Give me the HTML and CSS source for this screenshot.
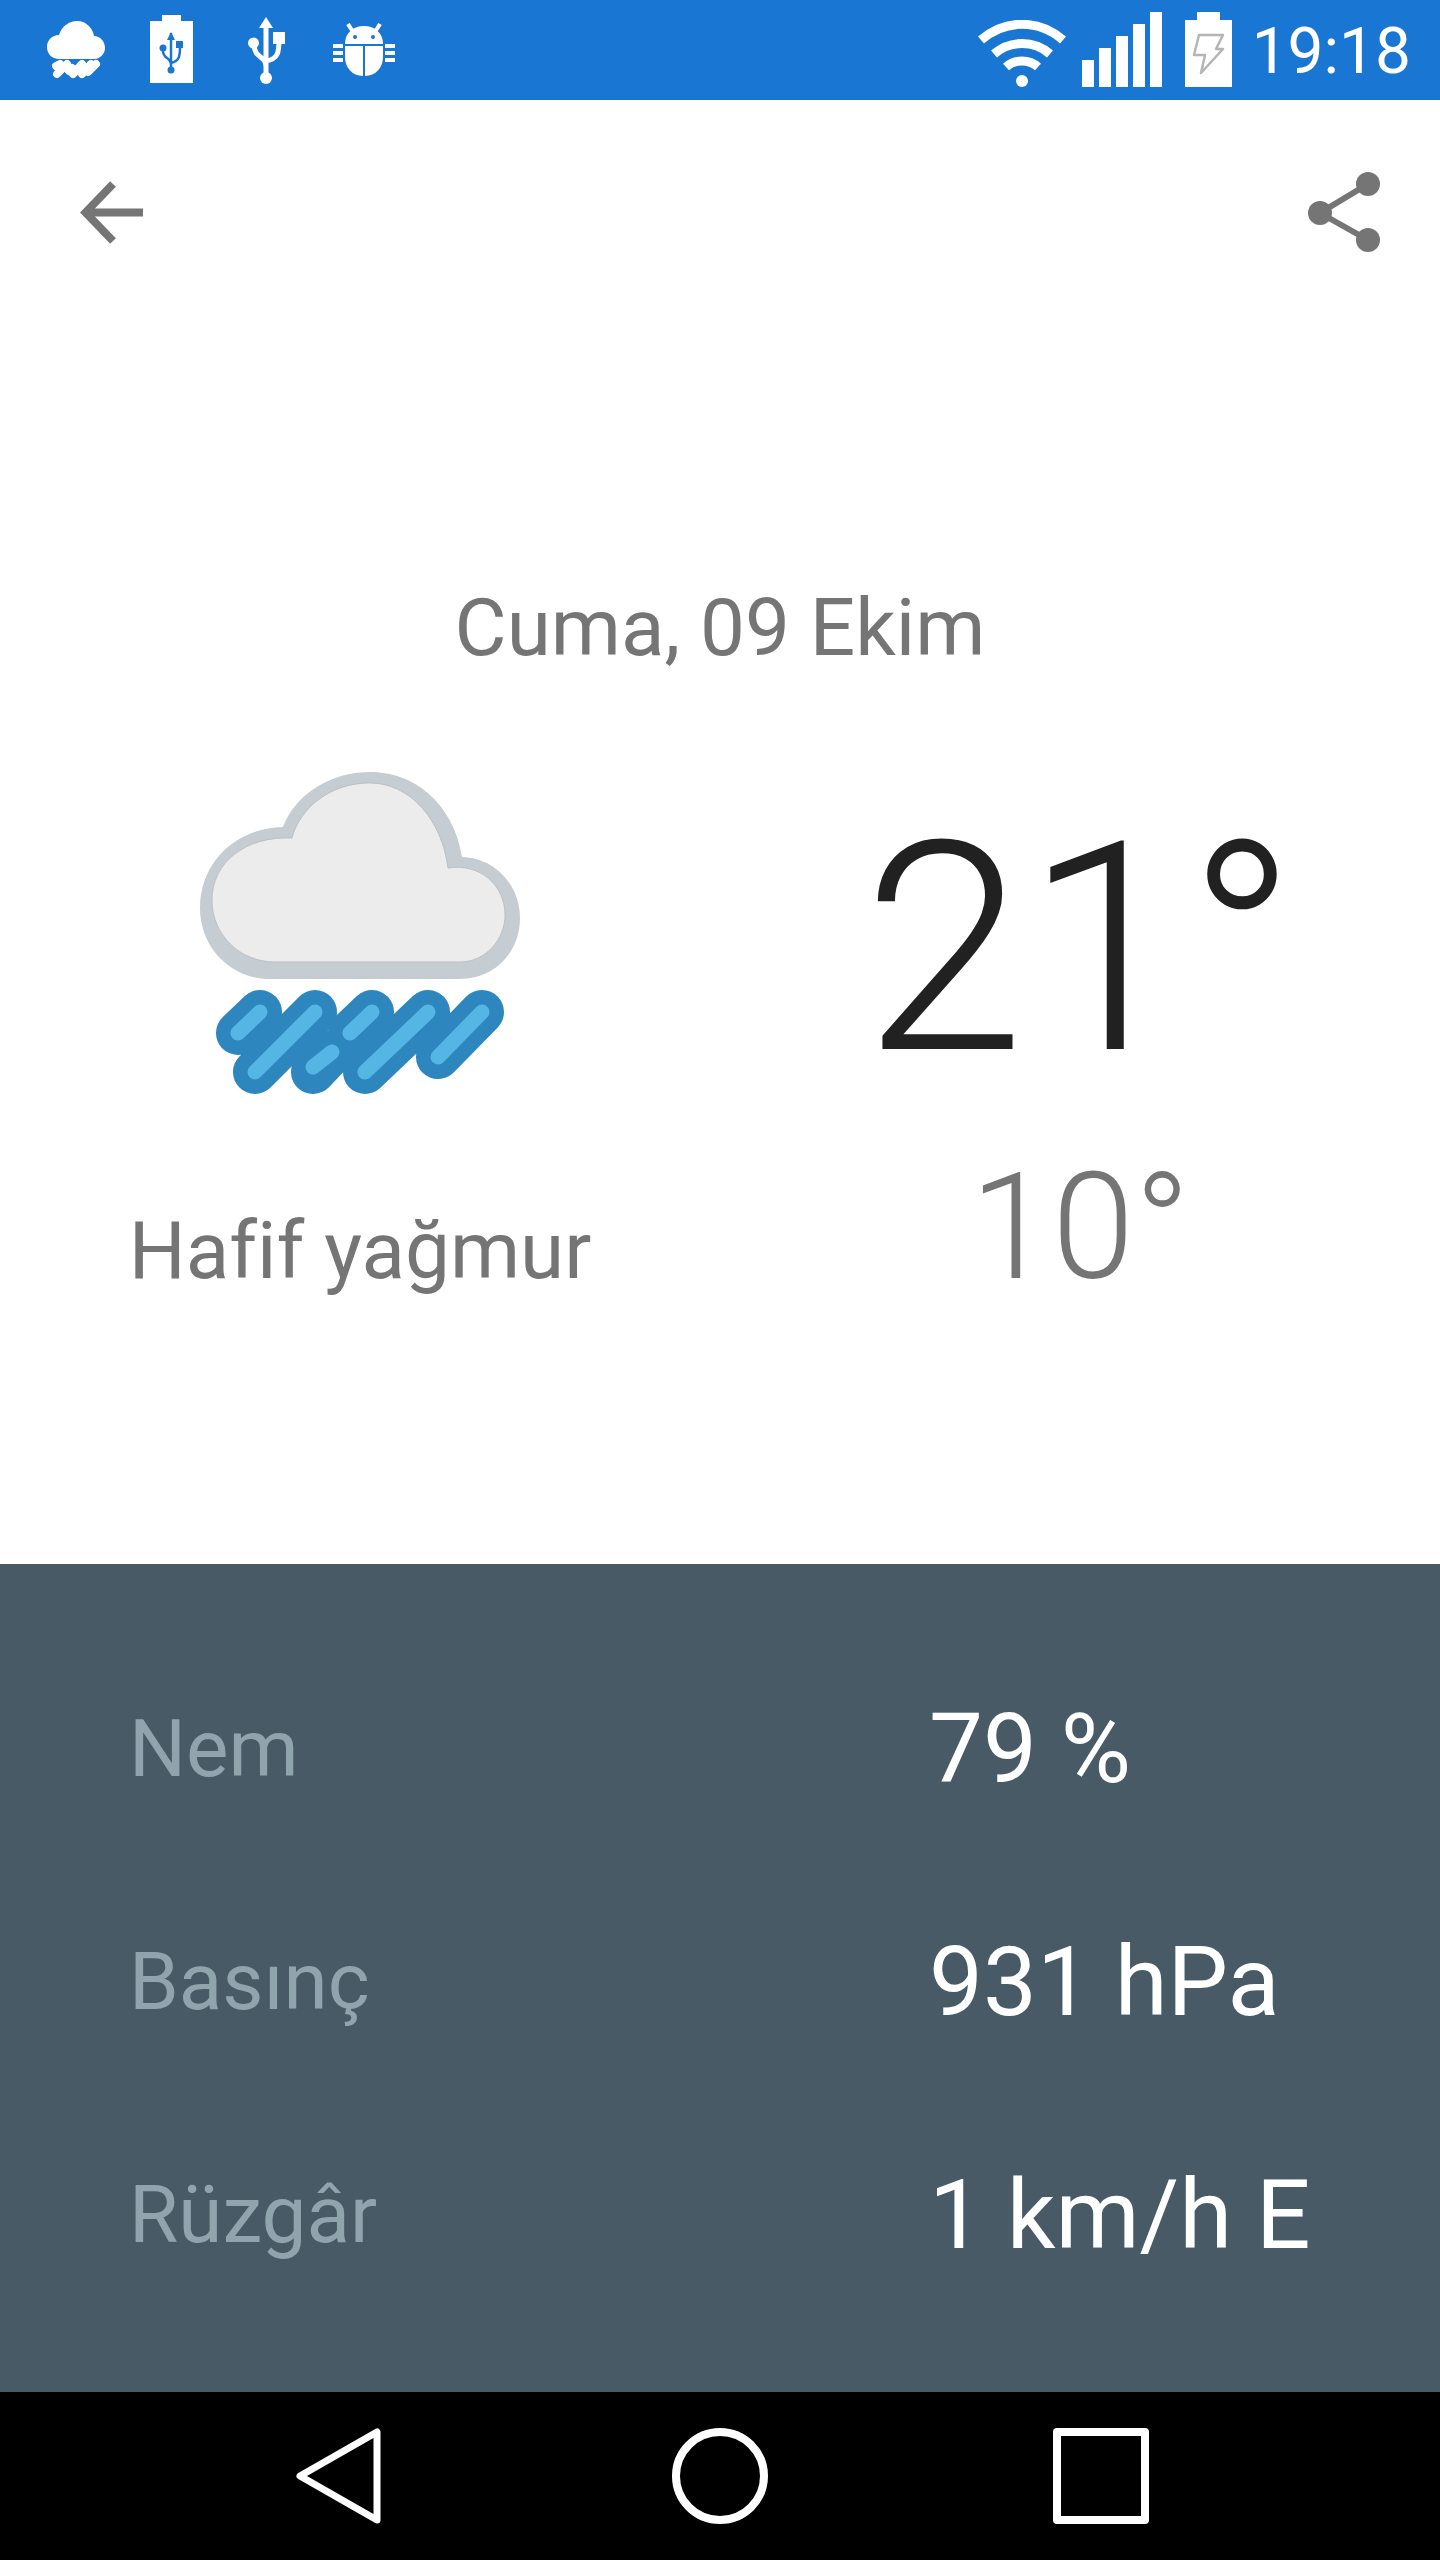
FILE: index.html
```html
<!DOCTYPE html>
<html lang="tr">
<head>
  <meta charset="UTF-8" />
  <title>Hava Durumu</title>
  <link rel="stylesheet" href="styles.css">
</head>
<body>
  <div class="phone">
    <!-- Status bar -->
    <div class="status-bar">
      <div class="status-left">
        <svg class="s-cloud" viewBox="0 0 58 58" width="58" height="58">
          <path fill="#fff" d="M12 38C5 38 0 33 0 26C0 19 5 14 12 14C15 5 22 0 30 0C40 0 46 8 47 15C53 15 58 20 58 27C58 33 53 38 47 38Z"/>
          <g stroke="#fff" stroke-width="8" stroke-linecap="round" fill="none">
            <path d="M9 45L13 43M10 53L20 43M22 50L25 47M26 53L35 43M35 53L44 43M41 51L49 43"/>
          </g>
        </svg>
        <svg class="s-batt" viewBox="0 0 43 68" width="43" height="68">
          <path fill="#fff" d="M12 0H31V6H43V68H0V6H12Z"/>
          <g fill="none" stroke="#1976d2" stroke-width="2.5">
            <path d="M21 18V56M13 36C13 44 21 42 21 50M21 48C29 46 30 42 30 32"/>
          </g>
          <path fill="#1976d2" d="M21 17L25 25H17Z"/>
          <circle fill="#1976d2" cx="13" cy="33" r="3.500"/>
          <rect fill="#1976d2" x="26" y="26" width="7" height="7"/>
          <circle fill="#1976d2" cx="21" cy="55" r="3.500"/>
        </svg>
        <svg class="s-usb" viewBox="0 0 37 67" width="37" height="67">
          <path fill="#fff" d="M18 0L25 11H11Z"/>
          <g fill="none" stroke="#fff" stroke-width="5">
            <path d="M18 8V60M6 27C6 42 18 38 18 50M18 44C30 42 31 36 31 22"/>
          </g>
          <circle fill="#fff" cx="5.500" cy="26" r="5.500"/>
          <rect fill="#fff" x="25" y="15" width="12" height="12"/>
          <circle fill="#fff" cx="18" cy="61" r="6"/>
        </svg>
        <svg class="s-bug" viewBox="0 0 62 54" width="62" height="54">
          <path fill="none" stroke="#fff" stroke-width="4" d="M15 1L20 9M47 1L42 9"/>
          <path fill="#fff" d="M12 21C12 10 20 3 31 3C42 3 50 10 50 21Z"/>
          <path fill="#fff" d="M12 23H30V53C19 53 12 44 12 34ZM32 23H50V34C50 44 43 53 32 53Z"/>
          <path fill="#fff" d="M0 21H10V25H0ZM0 28H10V32H0ZM0 35H10V39H0ZM52 21H62V25H52ZM52 28H62V32H52ZM52 35H62V39H52Z"/>
          <circle fill="#1976d2" cx="22" cy="14" r="2"/>
          <circle fill="#1976d2" cx="40" cy="14" r="2"/>
        </svg>
      </div>
      <div class="status-right">
        <svg class="s-wifi" viewBox="0 0 88 67" width="88" height="67">
          <g fill="none" stroke="#fff" stroke-width="9">
            <path d="M3 20C27 -1 61 -1 85 20"/>
            <path d="M16 34C32 20 56 20 72 34"/>
            <path d="M28 47C37 39 51 39 60 47"/>
          </g>
          <circle fill="#fff" cx="44" cy="61" r="6"/>
        </svg>
        <div class="signal">
          <span class="bar bar-1"></span>
          <span class="bar bar-2"></span>
          <span class="bar bar-3"></span>
          <span class="bar bar-4"></span>
          <span class="bar bar-5"></span>
        </div>
        <svg class="s-charge" viewBox="0 0 47 75" width="47" height="75">
          <path fill="#fff" d="M12 0H35V8H47V75H0V8H12Z"/>
          <path fill="none" stroke="#b5b5b5" stroke-width="2.500" stroke-linejoin="round" d="M14 23H38L31 37H38L16 61L20 43H9Z"/>
        </svg>
        <span class="clock">19:18</span>
      </div>
    </div>

    <!-- Toolbar -->
    <div class="toolbar">
      <svg viewBox="0 0 63 63" width="63" height="63">
        <path fill="none" stroke="#757575" stroke-width="8" d="M33 3L5.500 31.500L33 60M5.500 31.500H63"/>
      </svg>
      <svg viewBox="0 0 72 80" width="72" height="80">
        <path fill="none" stroke="#757575" stroke-width="6" d="M60 12L12 41L60 68"/>
        <circle fill="#757575" cx="60" cy="12" r="12"/>
        <circle fill="#757575" cx="12" cy="41" r="12"/>
        <circle fill="#757575" cx="60" cy="68" r="12"/>
      </svg>
    </div>

    <!-- Forecast -->
    <div class="forecast">
      <div class="date">Cuma, 09 Ekim</div>
      <div class="forecast-grid">
        <div class="condition">
          <svg class="weather-icon" viewBox="0 0 360 360" width="360" height="360">
            <path fill="#c5ccd2" d="M90 229C50 229 20 197 20 158C20 113 55 78 103 77C115 45 150 22 190 22C240 22 275 60 282 107C315 108 340 135 340 168C340 202 315 229 280 229Z"/>
            <path fill="#ececec" stroke="#b4babf" stroke-width="0.800" d="M95 212C60 212 32 185 32 150C32 113 65 86 112 88C120 58 150 33 190 33C230 33 262 70 268 118C300 113 325 135 325 165C325 190 305 212 280 212Z"/>
            <g fill="none" stroke="#2e86bf" stroke-width="44" stroke-linecap="round">
              <path d="M58 283L80 262M75 322L135 262M133 322L152 302M170 283L192 262M185 322L248 262M258 307L302 262"/>
            </g>
            <g fill="none" stroke="#55b6e6" stroke-width="15" stroke-linecap="round">
              <path d="M58 283L80 262M75 322L135 262M133 317L152 302M170 283L192 262M185 322L248 262M258 307L302 262"/>
            </g>
          </svg>
          <div class="condition-text">Hafif yağmur</div>
        </div>
        <div class="temps">
          <div class="temp-high">21°</div>
          <div class="temp-low">10°</div>
        </div>
      </div>
    </div>

    <!-- Details -->
    <div class="details">
      <div class="detail-row">
        <div class="detail-label">Nem</div>
        <div class="detail-value">79 %</div>
      </div>
      <div class="detail-row">
        <div class="detail-label">Basınç</div>
        <div class="detail-value">931 hPa</div>
      </div>
      <div class="detail-row">
        <div class="detail-label">Rüzgâr</div>
        <div class="detail-value">1 km/h E</div>
      </div>
    </div>

    <!-- Navigation bar -->
    <div class="nav-bar">
      <svg viewBox="0 0 85 96" width="85" height="96">
        <path fill="none" stroke="#fff" stroke-width="7" stroke-linejoin="round" d="M81 4V92L4 48Z"/>
      </svg>
      <svg class="nav-home" viewBox="0 0 96 96" width="96" height="96">
        <circle fill="none" stroke="#fff" stroke-width="8" cx="48" cy="48" r="44"/>
      </svg>
      <svg viewBox="0 0 96 96" width="96" height="96">
        <rect fill="none" stroke="#fff" stroke-width="8" stroke-linejoin="round" x="4" y="4" width="88" height="88"/>
      </svg>
    </div>
  </div>
</body>
</html>
```

FILE: styles.css
```css
body {
  margin: 0;
  padding: 0;
  background-color: #fff;
  font-family: Roboto, "Liberation Sans", sans-serif;
}

.phone {
  width: 1440px;
  height: 2560px;
  display: flex;
  flex-direction: column;
  overflow: hidden;
}

/* status bar */
.status-bar {
  height: 100px;
  background-color: #1976d2;
  display: flex;
  justify-content: space-between;
  flex-shrink: 0;
}

.status-left {
  display: flex;
  align-items: flex-start;
  padding-left: 47px;
}

.s-cloud { margin-top: 21px; }
.s-batt { margin: 15px 0 0 45px; }
.s-usb { margin: 17px 0 0 55px; }
.s-bug { margin: 23px 0 0 48px; }

.status-right {
  display: flex;
  align-items: flex-start;
  padding-right: 29px;
}

.s-wifi { margin-top: 20px; }

.signal {
  display: flex;
  align-items: flex-end;
  gap: 5px;
  height: 75px;
  margin: 12px 0 0 16px;
}

.bar {
  width: 12px;
  background-color: #fff;
}

.bar-1 { height: 27px; }
.bar-2 { height: 39px; }
.bar-3 { height: 51px; }
.bar-4 { height: 63px; }
.bar-5 { height: 75px; }

.s-charge { margin: 12px 0 0 23px; }

.clock {
  margin-left: 20px;
  font-size: 64px;
  line-height: 103px;
  color: #fff;
}

/* toolbar */
.toolbar {
  display: flex;
  justify-content: space-between;
  align-items: center;
  height: 224px;
  padding: 0 60px 0 80px;
  flex-shrink: 0;
}

/* forecast */
.forecast {
  flex: 1;
}

.date {
  margin-top: 264px;
  font-size: 80px;
  line-height: 80px;
  color: #757575;
  text-align: center;
}

.forecast-grid {
  display: grid;
  grid-template-columns: 1fr 1fr;
}

.condition {
  display: flex;
  flex-direction: column;
  align-items: center;
}

.weather-icon {
  margin-top: 82px;
}

.condition-text {
  margin-top: 101px;
  font-size: 80px;
  line-height: 80px;
  color: #757575;
}

.temps {
  padding-top: 131px;
  text-align: center;
}

.temp-high {
  font-size: 292px;
  font-weight: 300;
  line-height: 300px;
  color: #212121;
}

.temp-low {
  margin-top: 49px;
  font-size: 148px;
  font-weight: 300;
  line-height: 160px;
  color: #757575;
}

/* details */
.details {
  height: 828px;
  box-sizing: border-box;
  padding-top: 68px;
  background-color: #475a65;
  flex-shrink: 0;
}

.detail-row {
  display: grid;
  grid-template-columns: 800px 1fr;
  align-items: center;
  height: 233px;
  padding-left: 129px;
  font-size: 80px;
}

.detail-label {
  color: #90a4ae;
}

.detail-value {
  font-size: 96px;
  color: #fff;
}

/* nav bar */
.nav-bar {
  height: 168px;
  background-color: #000;
  display: flex;
  justify-content: space-between;
  align-items: center;
  padding: 0 291px 0 296px;
  flex-shrink: 0;
}

.nav-home {
  margin-left: 6px;
}
```
